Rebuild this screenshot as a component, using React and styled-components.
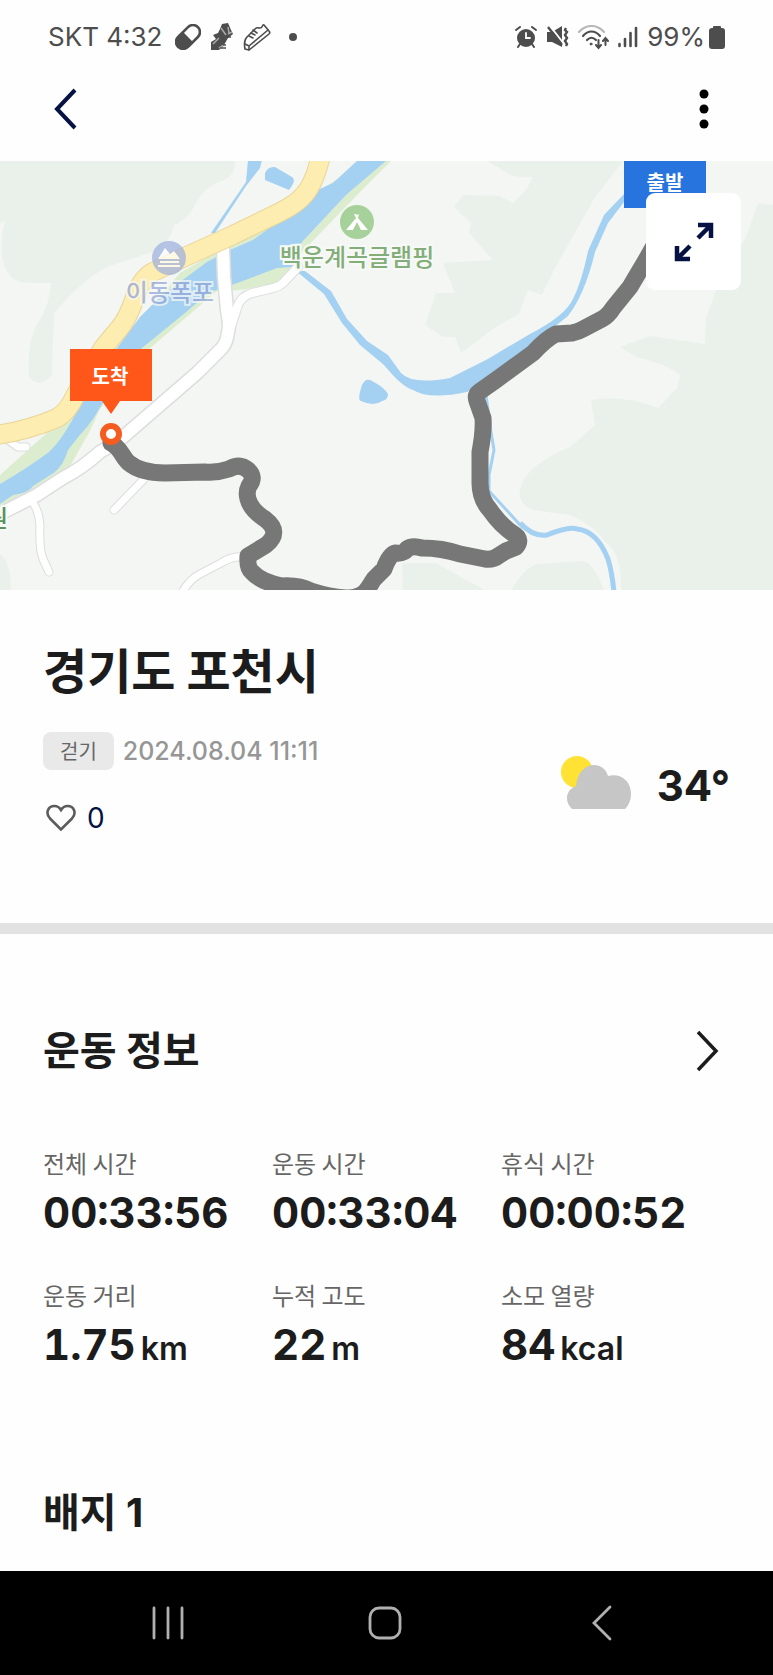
import styled, { createGlobalStyle, ThemeProvider } from "styled-components";

const theme = {
  colors: {
    ink: "#1c1c1c",
    navy: "#061243",
    gray: "#666666",
    dateGray: "#969696",
    statusGray: "#4d4d4d",
    chip: "#e9e9e9",
    divider: "#e2e2e2",
    white: "#fefefe",
    land: "#f3f6f3",
    forest: "#eaf1ea",
    water: "#a4d1f2",
    bank: "#dcedcf",
    trail: "#777777",
    start: "#2874df",
    finish: "#ff571a",
  },
  fonts: {
    korean: `"Noto Sans CJK KR", sans-serif`,
    latin: `Inter, "Noto Sans CJK KR", sans-serif`,
  },
};

const GlobalStyle = createGlobalStyle`
  *, *::before, *::after {
    box-sizing: border-box;
  }
  body {
    margin: 0;
    background: ${theme.colors.white};
  }
  h1, h2, dl, dt, dd {
    margin: 0;
    font-weight: inherit;
  }
  svg {
    display: block;
    flex-shrink: 0;
  }
`;

const Screen = styled.div`
  min-height: 100vh;
  display: flex;
  flex-direction: column;
  background: ${(props) => props.theme.colors.white};
  color: ${(props) => props.theme.colors.ink};
  font-family: ${(props) => props.theme.fonts.korean};
`;
const StatusBar = styled.div`
  height: 72px;
  padding: 2px 48px 0;
  display: flex;
  align-items: center;
  justify-content: space-between;
  color: ${(props) => props.theme.colors.statusGray};
  font-family: ${(props) => props.theme.fonts.latin};
  font-size: 26px;
  line-height: 32px;
`;
const StatusGroup = styled.div`
  display: flex;
  align-items: center;
  gap: ${(props) => props.gap}px;
`;
const Header = styled.header`
  padding: 0 32px 15px;
  display: flex;
  justify-content: space-between;
`;
const IconButton = styled.button`
  width: ${(props) => props.width}px;
  height: ${(props) => props.height}px;
  padding: 0;
  border: 0;
  background: none;
  color: ${(props) => props.theme.colors.navy};
  display: flex;
  align-items: center;
  justify-content: center;
  cursor: pointer;
`;
const MapPanel = styled.section`
  position: relative;
  height: 429px;
  overflow: hidden;
  background: ${(props) => props.theme.colors.land};
`;
const ExpandButton = styled(IconButton)`
  position: absolute;
  top: 32px;
  right: 32px;
  border-radius: 9px;
  background: #ffffff;
`;
const PlaceName = styled.text`
  font-family: ${(props) => props.theme.fonts.korean};
  font-size: 24px;
  font-weight: 500;
  paint-order: stroke;
  stroke: #f7f9f6;
  stroke-width: 4px;
`;
const PinText = styled.text`
  font-family: ${(props) => props.theme.fonts.korean};
  font-size: 20px;
  font-weight: 700;
  fill: #ffffff;
  text-anchor: middle;
`;
const Summary = styled.section`
  padding: 42px 43px 85px;
  border-bottom: 11px solid ${(props) => props.theme.colors.divider};
`;
const Place = styled.h1`
  font-size: 48px;
  line-height: 72px;
  font-weight: 700;
`;
const SummaryRow = styled.div`
  margin-top: 28px;
  display: flex;
  justify-content: space-between;
`;
const Meta = styled.div`
  display: flex;
  align-items: center;
  gap: 9px;
`;
const Chip = styled.span`
  padding: 0 17px;
  border-radius: 8px;
  background: ${(props) => props.theme.colors.chip};
  color: ${(props) => props.theme.colors.gray};
  font-size: 20px;
  line-height: 38px;
`;
const DateText = styled.time`
  color: ${(props) => props.theme.colors.dateGray};
  font-family: ${(props) => props.theme.fonts.latin};
  font-size: 25px;
  line-height: 38px;
  font-weight: 500;
`;
const LikeButton = styled.button`
  margin-top: 28px;
  padding: 0 3px;
  border: 0;
  background: none;
  display: flex;
  align-items: center;
  gap: 11px;
  color: ${(props) => props.theme.colors.navy};
  font-family: ${(props) => props.theme.fonts.latin};
  font-size: 28px;
  line-height: 40px;
  cursor: pointer;
`;
const Weather = styled.div`
  padding-top: 24px;
  display: flex;
  align-items: flex-start;
  gap: 26px;
  font-family: ${(props) => props.theme.fonts.latin};
  font-size: 42px;
  line-height: 60px;
  font-weight: 700;
`;
const Section = styled.section`
  padding: 0 43px;
`;
const SectionHeader = styled.div`
  padding: 87px 0 0;
  display: flex;
  align-items: center;
  justify-content: space-between;
`;
const SectionTitle = styled.h2`
  font-family: ${(props) => props.theme.fonts.latin};
  font-size: 40px;
  line-height: 60px;
  font-weight: 700;
`;
const StatGrid = styled.dl`
  padding: 64px 0 15px;
  display: grid;
  grid-template-columns: repeat(3, 1fr);
  row-gap: 32px;
`;
const StatLabel = styled.dt`
  color: ${(props) => props.theme.colors.gray};
  font-size: 24px;
  line-height: 36px;
`;
const StatValue = styled.dd`
  display: flex;
  align-items: baseline;
  gap: 5px;
  font-family: ${(props) => props.theme.fonts.latin};
  font-size: 42px;
  line-height: 64px;
  font-weight: 700;
  font-variant-numeric: tabular-nums;
`;
const Unit = styled.span`
  font-size: 32px;
  font-weight: 600;
`;
const NavBar = styled.nav`
  margin-top: auto;
  height: 104px;
  padding: 0 63px 0 60px;
  display: grid;
  grid-template-columns: repeat(3, 1fr);
  background: #000000;
`;
const NavButton = styled.button`
  padding: 0;
  border: 0;
  background: none;
  color: #b0b0b0;
  display: flex;
  align-items: center;
  justify-content: center;
  cursor: pointer;
`;

const PillIcon = () => (
  <svg width="26" height="26" viewBox="0 0 26 26">
    <g transform="rotate(-45 13 13)">
      <path d="M13 5H6.500a8 8 0 0 0 0 16H13z" fill="currentColor" />
      <rect x="-1" y="6" width="28" height="14" rx="7" fill="none" stroke="currentColor" strokeWidth="2.600" />
    </g>
  </svg>
);

const StepsIcon = () => (
  <svg width="24" height="28" viewBox="0 0 24 28">
    <path d="M12 1l6-1 3 7 2 4-5 4-4 7-5 5H1v-8l5-3-3-4 5-2 2-4z" fill="currentColor" />
    <path d="M11 5l5 7M18 4l1 6M3 21l6-6M18 11l4-2M14 22l-5 3" stroke="#aaaaaa" strokeWidth="1.500" fill="none" />
    <path d="M10 25h6M13 22h3M15 18h1M18 14h3" stroke="currentColor" strokeWidth="1.500" />
  </svg>
);

const ShoeIcon = () => (
  <svg width="28" height="28" viewBox="0 0 28 28" fill="none" stroke="currentColor" strokeWidth="1.600" strokeLinejoin="round" strokeLinecap="round">
    <path d="M2 26l4 1 20-16c1-1 1-2 0-3l-5-6c-2-1-1 3-4 3-2 0-3-1-5 1L4 14c-3 3-3 7-2 12z" />
    <path d="M2 21l4 2L25 7M6 23v4M10 7l4 3M8 10l4 2M6 13l4 2" />
  </svg>
);

const AlarmIcon = () => (
  <svg width="22" height="22" viewBox="0 0 22 22" fill="none" stroke="currentColor" strokeLinecap="round">
    <circle cx="11" cy="12" r="9" fill="currentColor" stroke="none" />
    <path d="M1 4l4-3M21 4l-4-3" strokeWidth="2" />
    <path d="M5 18l-2 3M17 18l2 3" strokeWidth="2" />
    <path d="M11 7v5h4" stroke="#ffffff" strokeWidth="1.800" />
  </svg>
);

const MuteIcon = () => (
  <svg width="23" height="22" viewBox="0 0 23 22">
    <path d="M1 6h5l10-6v21L6 16H1z" fill="currentColor" />
    <path d="M4 0l14 18" stroke="#ffffff" strokeWidth="2" />
    <path d="M2 1l14 18" stroke="currentColor" strokeWidth="2.400" />
    <path d="M20 2l-1 2 2 2-2 3 2 3-2 3 2 3-1 2" fill="none" stroke="currentColor" strokeWidth="2.400" />
  </svg>
);

const WifiIcon = () => (
  <svg width="31" height="25" viewBox="0 0 31 25" fill="none" stroke="currentColor" strokeWidth="2.200" strokeLinecap="round">
    <path d="M1 7c7-8 18-8 25 0" opacity="0.4" />
    <path d="M5 11c5-6 12-6 17 0M9 15c3-3 6-3 9 0" />
    <circle cx="13" cy="19" r="1" fill="currentColor" strokeWidth="1" />
    <path d="M20.500 15v7M18 20l2.500 3 2.500-3M27.500 20v-6M25 16l2.500-3 2.500 3" strokeWidth="2" />
  </svg>
);

const SignalIcon = () => (
  <svg width="20" height="22" viewBox="0 0 20 22" stroke="currentColor" strokeWidth="2.600" strokeLinecap="round">
    <path d="M1.500 18v2M7 13v7M12.500 7v13M18 2v18" />
  </svg>
);

const BatteryIcon = () => (
  <svg width="16" height="23" viewBox="0 0 16 23" fill="currentColor">
    <rect x="4" width="8" height="5" rx="1" />
    <rect y="2" width="16" height="21" rx="3" />
  </svg>
);

const HeartIcon = () => (
  <svg width="30" height="28" viewBox="0 0 30 28" fill="none" stroke="#5c5c5c" strokeWidth="2.600">
    <path d="M15 25.500L4 14.500C-1 9 2 2 8.500 2c3 0 5 1.500 6.500 4 1.500-2.500 3.500-4 6.500-4C28 2 31 9 26 14.500z" />
  </svg>
);

const CloudIcon = () => (
  <svg width="70" height="53" viewBox="0 0 70 53">
    <circle cx="16" cy="16" r="16" fill="#ffe234" />
    <path
      d="M11 53c-3-3-5-6-5-11 0-6 4-10 9-12 1-12 8-21 18-21 7 0 12 4 14 11 13-3 23 5 23 18 0 7-3 12-6 15z"
      fill="#c6c6c6"
    />
  </svg>
);

const road = "M223 87L224 116L227 149Q230 166 228 171Q227 181 222 187L197 212L123 276Q113 284 100 291Q81 308 63 317L37 334L-6 356";
const lane = "M298 106L284 121Q280 126 269 128L252 132Q242 135 238 144L230 169";
const sideRoads = [
  "M145 317L114 349",
  "M33 342Q39 350 40 365Q39 388 43 398L49 411",
  "M242 396Q232 395 221 402L200 413Q190 418 183 430",
  "M8 279L18 286L26 286",
];
const highway =
  "M321 -6Q314 25 302 36Q294 45 270 56L233 74L187 95L153 111Q141 118 135 136Q128 158 118 169L103 187L76 233Q68 251 57 257Q27 270 -5 274";
const trail =
  "M111 282C121 287 122 296 129 302Q141 312 165 312L205 311Q217 312 229 308Q240 302 248 309Q256 316 249 325Q246 331 248 338Q251 349 265 358Q282 371 266 384L248 395Q247 407 252 411Q261 421 282 425Q299 424 311 430Q330 436 345 437C366 437 367 428 374 418L384 408Q389 394 395 392Q404 393 407 388Q412 384 422 387Q442 387 460 393L485 398Q493 399 498 395L506 390L516 386Q522 379 515 374Q501 365 490 349Q480 338 480 322L480 291Q484 270 483 257L477 240Q475 234 479 231L496 219L533 192Q547 177 556 173L572 172Q578 171 583 168L602 158Q608 155 613 147L630 126L646 99L668 60";

const TrailMap = () => {
  const { colors } = theme;
  return (
    <svg width="100%" height="100%" viewBox="0 0 773 429" preserveAspectRatio="xMidYMid slice" role="img" aria-label="이동 경로 지도">
      <g fill={colors.forest}>
        <path d="M0 0H235Q236 13 224 19Q202 26 193 48Q185 60 174 64Q169 82 158 89L116 103Q90 110 55 151Q53 162 52 215H29Q27 184 36 165Q50 145 51 122H28Q6 121 2 96Q1 66 6 59L0 62z" />
        <path d="M28 214Q40 230 51 214zM0 393Q11 401 11 429H0z" />
        <path d="M488 0L510 14Q522 17 533 16L526 29L513 42L499 35L463 34L454 46L471 62L469 72L493 99L443 102L455 132H436L431 147L425 164L443 176H455L461 192L496 166L519 153L528 129L542 134L555 107L594 38L623 0z" />
        <path d="M773 44L758 42L746 76L716 129L706 158L705 183L650 175L620 186L636 196Q664 202 680 214L678 226L658 247Q625 234 591 239L595 264L570 286Q525 304 520 329Q517 342 533 349L570 354Q594 364 605 381Q622 391 621 430H773z" />
        <path d="M402 402L436 402L459 415L487 430H403zM511 430Q524 406 538 403L580 400Q593 398 604 430z" />
      </g>

      <path
        fill={colors.bank}
        d="M370 -3H394L362 29L302 91L298 108L273 124L240 129L217 130L142 194L100 248L90 270L62 319L28 336L0 350V314L48 271L117 187L180 112L253 70L283 53z"
      />
      <g fill={colors.water}>
        <path d="M358 -1L333 22L313 31L283 57L253 79L230 89L207 101L180 121L157 139L140 156L117 187L82 240Q65 276 49 291Q29 306 0 323V343L13 334Q29 332 33 325L55 311Q64 303 68 289L79 275L87 266L93 258L104 240L142 187L185 152L208 132L240 121L277 107L292 106L302 81L346 34L387 -1z" />
        <path d="M248 -1H262L260 7L246 25L215 72L211 72L246 21zM265 12Q268 5 275 6L292 16Q297 19 289 29L265 19z" />
        <path d="M296 110L305 110L331 130L347 158L367 180L388 194L401 212Q412 224 450 217L486 199L530 173Q565 155 573 138Q582 120 588 90L604 54L624 33V41L608 62L595 91Q585 133 568 155L530 185L492 217L467 231Q429 239 413 229Q402 226 384 204L360 184L342 162L324 133z" />
        <path d="M362 224Q366 216 372 220Q384 226 388 233Q388 239 382 240Q374 246 361 240Q357 239 362 224z" />
      </g>
      <g fill="none" stroke={colors.water} strokeLinejoin="round">
        <path d="M486 234L491 271L494 289L489 314V330L523 367" strokeWidth="3" />
        <path d="M520 362Q533 376 547 374Q569 365 577 368Q597 370 608 398Q612 411 614 431" strokeWidth="5" />
      </g>

      <g fill="none" strokeLinecap="round" strokeLinejoin="round">
        <g stroke="#dddddf">
          <path d={road} strokeWidth="15" />
          <path d={lane} strokeWidth="10" />
          {sideRoads.map((d) => (
            <path key={d} d={d} strokeWidth="9" />
          ))}
        </g>
        <g stroke="#ffffff">
          <path d={road} strokeWidth="12" />
          <path d={lane} strokeWidth="8" />
          {sideRoads.map((d) => (
            <path key={d} d={d} strokeWidth="7" />
          ))}
        </g>
        <path d={highway} stroke="#ead598" strokeWidth="20" />
        <path d={highway} stroke="#fdedb1" strokeWidth="18" />
        <path d={trail} stroke={colors.trail} strokeWidth="17" />
      </g>

      <circle cx="357" cy="61" r="17" fill="#a7d19a" />
      <path d="M346 69L356 57L354 53H356L357 54L359 53L358 57L368 69H361L357 61L353 69z" fill="#ffffff" />
      <PlaceName x="357" y="105" textAnchor="middle" fill="#83ad79">
        백운계곡글램핑
      </PlaceName>

      <g opacity="0.7">
        <circle cx="169" cy="97" r="17" fill="#9caedf" />
        <path d="M158 98L165 87L170 93L174 90L180 98zM160 100H179V102H160zM158 104H180V106H158z" fill="#ffffff" />
        <PlaceName x="170" y="140" textAnchor="middle" fill="#8fa3d8">
          이동폭포
        </PlaceName>
      </g>
      <PlaceName x="8" y="366" textAnchor="end" fill="#5b925a">
        원
      </PlaceName>

      <path d="M70 188H152V240H120L111 253L102 240H70z" fill={colors.finish} />
      <PinText x="110" y="223">
        도착
      </PinText>
      <circle cx="111" cy="273" r="8" fill="#ffffff" stroke="#f45c20" strokeWidth="6" />
      <rect x="624" width="82" height="47" fill={colors.start} />
      <PinText x="665" y="29">
        출발
      </PinText>
    </svg>
  );
};

const stats = [
  { label: "전체 시간", value: "00:33:56" },
  { label: "운동 시간", value: "00:33:04" },
  { label: "휴식 시간", value: "00:00:52" },
  { label: "운동 거리", value: "1.75", unit: "km" },
  { label: "누적 고도", value: "22", unit: "m" },
  { label: "소모 열량", value: "84", unit: "kcal" },
];

const App = () => (
  <ThemeProvider theme={theme}>
    <GlobalStyle />
    <Screen>
      <StatusBar>
        <StatusGroup gap={13}>
          <span>SKT 4:32</span>
          <StatusGroup gap={9}>
            <PillIcon />
            <StepsIcon />
            <ShoeIcon />
            <svg width="26" height="10" viewBox="0 0 26 10">
              <circle cx="13" cy="5" r="4" fill="currentColor" />
            </svg>
          </StatusGroup>
        </StatusGroup>
        <StatusGroup gap={9}>
          <AlarmIcon />
          <MuteIcon />
          <WifiIcon />
          <SignalIcon />
          <StatusGroup gap={4}>
            <span>99%</span>
            <BatteryIcon />
          </StatusGroup>
        </StatusGroup>
      </StatusBar>

      <Header>
        <IconButton type="button" width={66} height={74} aria-label="뒤로">
          <svg width="24" height="42" viewBox="0 0 24 42" fill="none" stroke="currentColor" strokeWidth="4">
            <path d="M22 2L4 21L22 40" />
          </svg>
        </IconButton>
        <IconButton type="button" width={74} height={74} aria-label="더보기">
          <svg width="10" height="40" viewBox="0 0 10 40" fill="#000000">
            <circle cx="5" cy="5" r="4.500" />
            <circle cx="5" cy="20" r="4.500" />
            <circle cx="5" cy="35" r="4.500" />
          </svg>
        </IconButton>
      </Header>

      <MapPanel>
        <TrailMap />
        <ExpandButton type="button" width={95} height={97} aria-label="지도 확대">
          <svg width="40" height="40" viewBox="0 0 40 40" fill="none" stroke="currentColor" strokeWidth="4.500">
            <path d="M24 3H37V16M36 4L24 16" />
            <path d="M3 24V37H16M4 36L16 24" />
          </svg>
        </ExpandButton>
      </MapPanel>

      <Summary>
        <Place>경기도 포천시</Place>
        <SummaryRow>
          <div>
            <Meta>
              <Chip>걷기</Chip>
              <DateText dateTime="2024-08-04T11:11">2024.08.04 11:11</DateText>
            </Meta>
            <LikeButton type="button" aria-label="좋아요 0">
              <HeartIcon />
              <span>0</span>
            </LikeButton>
          </div>
          <Weather>
            <CloudIcon />
            <span>34°</span>
          </Weather>
        </SummaryRow>
      </Summary>

      <Section>
        <SectionHeader>
          <SectionTitle>운동 정보</SectionTitle>
          <IconButton type="button" width={44} height={60} aria-label="운동 정보 더보기">
            <svg width="24" height="42" viewBox="0 0 24 42" fill="none" stroke="#1c1c1c" strokeWidth="3.500">
              <path d="M2 2L20 21L2 40" />
            </svg>
          </IconButton>
        </SectionHeader>
        <StatGrid>
          {stats.map((stat) => (
            <div key={stat.label}>
              <StatLabel>{stat.label}</StatLabel>
              <StatValue>
                {stat.value}
                {stat.unit && <Unit>{stat.unit}</Unit>}
              </StatValue>
            </div>
          ))}
        </StatGrid>
      </Section>

      <Section>
        <SectionHeader>
          <SectionTitle>배지 1</SectionTitle>
        </SectionHeader>
      </Section>

      <NavBar aria-label="시스템">
        <NavButton type="button" aria-label="최근 앱">
          <svg width="32" height="34" viewBox="0 0 32 34" stroke="currentColor" strokeWidth="2.800" strokeLinecap="round">
            <path d="M2 2V32M16 2V32M30 2V32" />
          </svg>
        </NavButton>
        <NavButton type="button" aria-label="홈">
          <svg width="34" height="34" viewBox="0 0 34 34" fill="none" stroke="currentColor" strokeWidth="2.800">
            <rect x="2" y="2" width="30" height="30" rx="9" />
          </svg>
        </NavButton>
        <NavButton type="button" aria-label="뒤로 가기">
          <svg width="20" height="36" viewBox="0 0 20 36" fill="none" stroke="currentColor" strokeWidth="2.800" strokeLinecap="round">
            <path d="M18 2L2 18L18 34" />
          </svg>
        </NavButton>
      </NavBar>
    </Screen>
  </ThemeProvider>
);

export default App;
